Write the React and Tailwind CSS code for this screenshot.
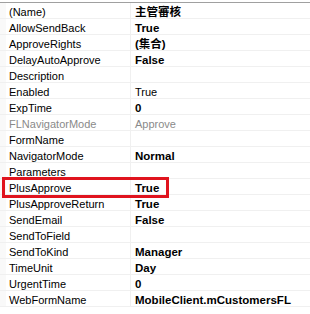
const rows = [
  ["(Name)", "主管審核", "b"],
  ["AllowSendBack", "True", "b"],
  ["ApproveRights", "(集合)", "b"],
  ["DelayAutoApprove", "False", "b"],
  ["Description", "", "n"],
  ["Enabled", "True", "n"],
  ["ExpTime", "0", "b"],
  ["FLNavigatorMode", "Approve", "g"],
  ["FormName", "", "n"],
  ["NavigatorMode", "Normal", "b"],
  ["Parameters", "", "n"],
  ["PlusApprove", "True", "b"],
  ["PlusApproveReturn", "True", "b"],
  ["SendEmail", "False", "b"],
  ["SendToField", "", "n"],
  ["SendToKind", "Manager", "b"],
  ["TimeUnit", "Day", "b"],
  ["UrgentTime", "0", "b"],
  ["WebFormName", "MobileClient.mCustomersFL", "b"],
];

export default function App() {
  return (
    <div
      className="relative w-[310px] h-[314px] bg-white overflow-hidden"
      style={{ fontFamily: '"Liberation Sans", "Noto Sans CJK TC", sans-serif' }}
    >
      <div className="mt-[2px] border-t border-[#a0a0a0]">
        {rows.map(([name, val, kind]) => (
          <div key={name} className="flex h-[16px] border-b border-[#f0f0f0]">
            <div className="w-[6px] bg-[#f9f9f9]" />
            <div
              className={`w-[125px] pl-[3px] pt-[2px] text-[11px] leading-[14px] border-r border-[#f0f0f0] ${
                kind === "g" ? "text-[#8a8a8a]" : "text-black"
              }`}
            >
              {name}
            </div>
            <div
              className={`flex-1 pl-[4px] pt-[2px] leading-[14px] ${
                kind === "b"
                  ? "font-bold text-[11.5px] text-black"
                  : kind === "g"
                  ? "text-[11px] text-[#8a8a8a]"
                  : "text-[11px] text-black"
              }`}
            >
              {val}
            </div>
          </div>
        ))}
      </div>
      <div className="absolute left-[2px] top-[177px] w-[167px] h-[21px] border-[3px] border-[#e0141e]" />
    </div>
  );
}
